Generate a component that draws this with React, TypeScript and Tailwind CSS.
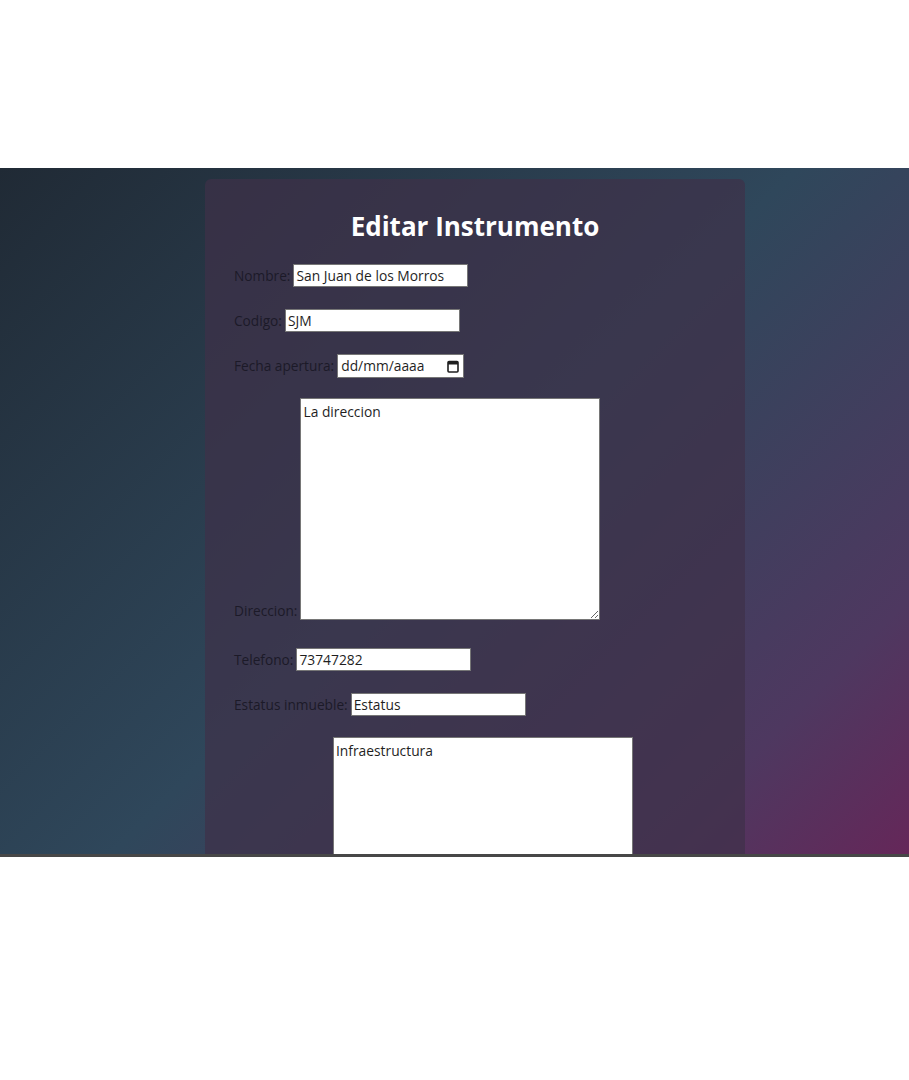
import React from 'react'

// ── Small pieces ──────────────────────────────────────────────────────────────

const font = "font-['Open_Sans','Noto_Sans',sans-serif]"

function Label({ children }: { children: React.ReactNode }) {
  return <span className="text-[13.7px] leading-[18px] text-[#1c1a28] whitespace-nowrap">{children}</span>
}

function TextField({ value }: { value: string }) {
  return (
    <input
      type="text"
      defaultValue={value}
      className="w-[175px] h-[23px] px-[2px] border border-[#767676] bg-white text-[13.8px] text-[#1f1f1f] outline-none"
    />
  )
}

function DateField() {
  return (
    <div className="flex items-center justify-between w-[127px] h-[24px] pl-[3px] pr-[4px] border border-[#767676] bg-white">
      <span className="text-[13.8px] text-[#1f1f1f]">dd/mm/aaaa</span>
      <svg width="12" height="13" viewBox="0 0 12 13" className="shrink-0">
        <rect x="1" y="1.5" width="10" height="10.5" rx="1" fill="none" stroke="#1f1f1f" strokeWidth="1.6" />
        <rect x="1" y="1.5" width="10" height="3" fill="#1f1f1f" />
      </svg>
    </div>
  )
}

function Area({ value }: { value: string }) {
  return (
    <textarea
      defaultValue={value}
      className="block w-[300px] h-[222px] px-[2px] py-[4px] border border-[#767676] bg-white text-[13.8px] leading-[18px] text-[#1f1f1f] outline-none"
    />
  )
}

// ── Page ──────────────────────────────────────────────────────────────────────

export default function App() {
  return (
    <div className={`min-h-[1080px] bg-white pt-[168px] ${font}`}>
      <section className="h-[689px] overflow-hidden border-b-[3px] border-[#474747] bg-[linear-gradient(135deg,#202a35_0%,#2f475b_50%,#4e3860_84%,#652759_100%)]">
        <div className="ml-[205px] mt-[11px] w-[540px] h-[800px] rounded-[6px] bg-[#3f3049]/70 px-[29px] pt-[29px]">
          <h1 className="text-center text-[26px] leading-[36px] font-bold text-white">Editar Instrumento</h1>

          <div className="mt-[20px] flex items-baseline gap-[3px]">
            <Label>Nombre:</Label>
            <TextField value="San Juan de los Morros" />
          </div>

          <div className="mt-[22px] flex items-baseline gap-[3px]">
            <Label>Codigo:</Label>
            <TextField value="SJM" />
          </div>

          <div className="mt-[22px] flex items-center gap-[3px]">
            <Label>Fecha apertura:</Label>
            <DateField />
          </div>

          <div className="mt-[20px] flex items-end gap-[3px]">
            <span className="translate-y-[2px]">
              <Label>Direccion:</Label>
            </span>
            <Area value="La direccion" />
          </div>

          <div className="mt-[28px] flex items-baseline gap-[3px]">
            <Label>Telefono:</Label>
            <TextField value="73747282" />
          </div>

          <div className="mt-[22px] flex items-baseline gap-[3px]">
            <Label>Estatus inmueble:</Label>
            <TextField value="Estatus" />
          </div>

          {/* label of this field sits below the fold */}
          <div className="mt-[21px] flex items-end">
            <div className="w-[99px] shrink-0" />
            <Area value="Infraestructura" />
          </div>
        </div>
      </section>
    </div>
  )
}
